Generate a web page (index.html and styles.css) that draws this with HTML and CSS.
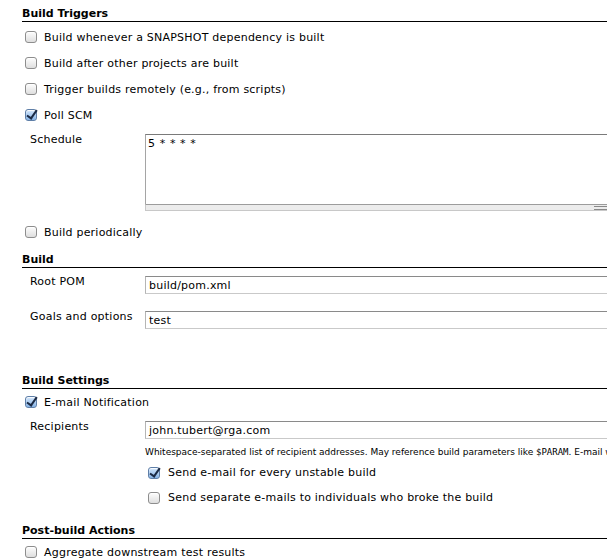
FILE: index.html
```html
<!DOCTYPE html>
<html>
<head>
<meta charset="utf-8">
<link rel="stylesheet" href="styles.css">
</head>
<body>
<div class="page">
  <section class="section">
    <h2 class="section-title">Build Triggers</h2>
    <div class="cb-row"><span class="cb"></span><span>Build whenever a SNAPSHOT dependency is built</span></div>
    <div class="cb-row"><span class="cb"></span><span>Build after other projects are built</span></div>
    <div class="cb-row"><span class="cb"></span><span>Trigger builds remotely (e.g., from scripts)</span></div>
    <div class="cb-row"><span class="cb checked"></span><span>Poll SCM</span></div>
    <div class="field schedule">
      <div class="label">Schedule</div>
      <div class="textarea-wrap">
        <div class="textarea">5 * * * *</div>
        <div class="grip-bar"><span class="grip"></span></div>
      </div>
    </div>
    <div class="cb-row periodic"><span class="cb"></span><span>Build periodically</span></div>
  </section>

  <section class="section build">
    <h2 class="section-title">Build</h2>
    <div class="field">
      <div class="label">Root POM</div>
      <div class="input">build/pom.xml</div>
    </div>
    <div class="field">
      <div class="label">Goals and options</div>
      <div class="input">test</div>
    </div>
  </section>

  <section class="section settings">
    <h2 class="section-title">Build Settings</h2>
    <div class="cb-row"><span class="cb checked"></span><span>E-mail Notification</span></div>
    <div class="field recip">
      <div class="label">Recipients</div>
      <div class="input">john.tubert@rga.com</div>
    </div>
    <div class="help">Whitespace-separated list of recipient addresses. May reference build parameters like <span class="mono">$PARAM</span>. E-mail will be sent when a build fails.</div>
    <div class="cb-row sub first-sub"><span class="cb checked"></span><span>Send e-mail for every unstable build</span></div>
    <div class="cb-row sub"><span class="cb"></span><span>Send separate e-mails to individuals who broke the build</span></div>
  </section>

  <section class="section post">
    <h2 class="section-title">Post-build Actions</h2>
    <div class="cb-row"><span class="cb"></span><span>Aggregate downstream test results</span></div>
  </section>
</div>
</body>
</html>
```

FILE: styles.css
```css
html, body {
  margin: 0;
  padding: 0;
  background: #fff;
  overflow: hidden;
}
body {
  font-family: "DejaVu Sans", Verdana, sans-serif;
  font-size: 11px;
  letter-spacing: 0.22px;
  color: #000;
}
.page {
  padding: 8px 0 0 22px;
  width: 800px;
}
.section-title {
  margin: 0;
  font-size: 11px;
  font-weight: bold;
  letter-spacing: 0;
  line-height: 12px;
  padding-bottom: 1px;
  border-bottom: 1px solid #000;
}
.cb-row {
  display: flex;
  align-items: center;
  height: 26px;
  padding-left: 3px;
  gap: 7px;
  white-space: nowrap;
}
.section-title + .cb-row {
  margin-top: 2px;
}
.settings .section-title + .cb-row,
.post .section-title + .cb-row {
  margin-top: 0;
}
.cb {
  width: 12px;
  height: 12px;
  box-sizing: border-box;
  border: 1px solid #8d8d8d;
  border-radius: 3px;
  background: linear-gradient(#fdfdfd, #dedede);
  box-shadow: inset 0 1px 1px rgba(255,255,255,0.9);
  flex: none;
  position: relative;
}
.cb.checked {
  border-color: #5f7fa8;
  background: linear-gradient(#d3e6fb, #86b3e6);
}
.cb.checked::after {
  content: "";
  position: absolute;
  left: 3px;
  top: -2px;
  width: 4px;
  height: 9px;
  border-right: 2px solid #1b2a44;
  border-bottom: 2px solid #1b2a44;
  transform: rotate(35deg);
}
.field {
  display: flex;
  align-items: flex-start;
  padding-left: 8px;
}
.label {
  width: 115px;
  flex: none;
  line-height: 14px;
  white-space: nowrap;
}
.schedule {
  margin-top: 6px;
}
.schedule .label {
  margin-top: -1px;
}
.textarea-wrap {
  width: 464px;
}
.textarea {
  height: 70px;
  box-sizing: border-box;
  border: 1px solid #a5a5a5;
  border-top-color: #7a7a7a;
  border-bottom: none;
  padding: 2px 2px;
  font-size: 11px;
  line-height: 14px;
  letter-spacing: 0.6px;
}
.grip-bar {
  height: 7px;
  border-top: 1px solid #9c9c9c;
  border-bottom: 1px solid #c8c8c8;
  border-left: 1px solid #c8c8c8;
  background: #ececec;
  box-sizing: border-box;
  position: relative;
}
.grip {
  position: absolute;
  right: 2px;
  top: 1px;
  width: 13px;
  height: 4px;
  border-top: 1px solid #8a8a8a;
  border-bottom: 1px solid #8a8a8a;
  box-sizing: border-box;
}
.periodic {
  margin-top: 8px;
}
.build {
  margin-top: 9px;
}
.build .field {
  margin-top: 8px;
}
.build .field + .field {
  margin-top: 17px;
}
.build .label {
  margin-top: -1px;
}
.input {
  width: 600px;
  height: 18px;
  box-sizing: border-box;
  border: 1px solid #c9c9c9;
  border-top-color: #8a8a8a;
  border-left-color: #b5b5b5;
  padding: 2px 3px 0;
  line-height: 14px;
  font-size: 11px;
}
.settings {
  margin-top: 46px;
}
.recip {
  margin-top: 6px;
}
.recip .label {
  margin-top: -1px;
}
.help {
  margin-left: 123px;
  margin-top: 7px;
  font-size: 9px;
  letter-spacing: 0;
  line-height: 12px;
  white-space: nowrap;
}
.mono {
  font-family: "DejaVu Sans Mono", monospace;
}
.cb-row.sub {
  padding-left: 126px;
  gap: 8px;
  height: 25px;
}
.cb-row.first-sub {
  margin-top: 2px;
}
.post {
  margin-top: 15px;
}
```
